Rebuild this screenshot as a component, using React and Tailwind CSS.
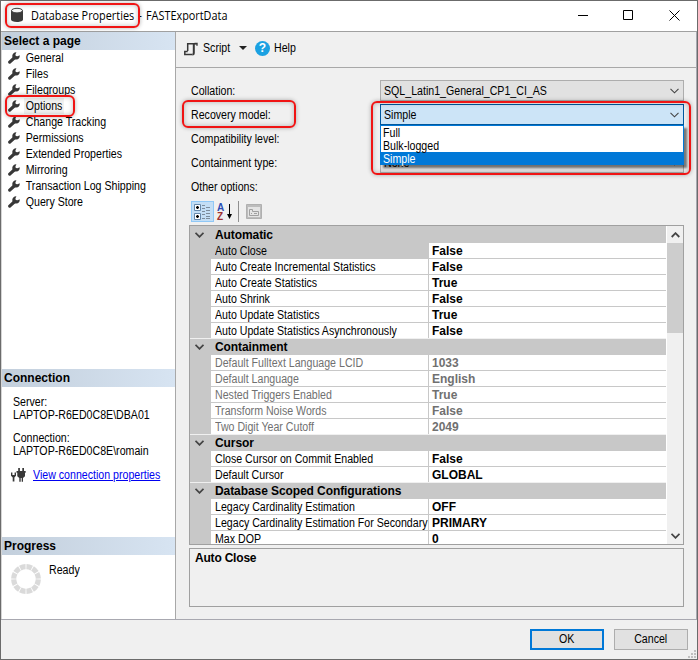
import React, { useState } from 'react';
import clsx from 'clsx';

const pages = [
    { name: 'General' },
    { name: 'Files' },
    { name: 'Filegroups' },
    { name: 'Options' },
    { name: 'Change Tracking' },
    { name: 'Permissions' },
    { name: 'Extended Properties' },
    { name: 'Mirroring' },
    { name: 'Transaction Log Shipping' },
    { name: 'Query Store' }
];

const groups = [
    {
        title: 'Automatic',
        rows: [
            ['Auto Close', 'False'],
            ['Auto Create Incremental Statistics', 'False'],
            ['Auto Create Statistics', 'True'],
            ['Auto Shrink', 'False'],
            ['Auto Update Statistics', 'True'],
            ['Auto Update Statistics Asynchronously', 'False']
        ]
    },
    {
        title: 'Containment',
        disabled: true,
        rows: [
            ['Default Fulltext Language LCID', '1033'],
            ['Default Language', 'English'],
            ['Nested Triggers Enabled', 'True'],
            ['Transform Noise Words', 'False'],
            ['Two Digit Year Cutoff', '2049']
        ]
    },
    {
        title: 'Cursor',
        rows: [
            ['Close Cursor on Commit Enabled', 'False'],
            ['Default Cursor', 'GLOBAL']
        ]
    },
    {
        title: 'Database Scoped Configurations',
        rows: [
            ['Legacy Cardinality Estimation', 'OFF'],
            ['Legacy Cardinality Estimation For Secondary', 'PRIMARY'],
            ['Max DOP', '0']
        ]
    }
];

const models = ['Full', 'Bulk-logged', 'Simple'];

// Narrow dialog lettering
function Label({ className = 'origin-left', children }) {
    return <span className={clsx('inline-block scale-x-[0.885] whitespace-nowrap', className)}>{children}</span>;
}

function DatabaseIcon() {
    return (
        <svg width="14" height="16" viewBox="0 0 14 16" className="relative -top-px">
            <path d="M1 3.500v9C1 14 3.500 15 7 15s6-1 6-2.500v-9z" fill="#3a3a3a" />
            <ellipse cx="7" cy="3.600" rx="5.500" ry="2.300" fill="#f4f4f4" stroke="#3a3a3a" />
        </svg>
    );
}

function WrenchIcon() {
    return (
        <svg width="12" height="12" viewBox="0 0 12 12" className="shrink-0">
            <path d="M1.700 10.100L6.200 6" stroke="#383838" strokeWidth="3.200" strokeLinecap="round" />
            <path d="M8.400 0.200L7.400 2.500l0.400 1.400 1.700 0.400L11.700 3.200c0.300 2.300-1 4.300-3.400 4.400-2.600 0.200-4.400-1.600-4-4C4.600 1.500 6.400 0 8.400 0.200z" fill="#383838" />
        </svg>
    );
}

function ScriptIcon() {
    return (
        <svg width="15" height="14" viewBox="0 0 15 14" fill="none" stroke="#383838" strokeWidth="1.500" className="relative top-px">
            <path d="M3.700 9V1.700H12.500" />
            <path d="M3.700 9.600H0.800V12.600H8.400" />
            <path d="M9.800 1.500V11.200Q9.800 12.600 8.400 12.600" strokeWidth="2" />
            <path d="M10.500 1.500h2.500v2.300" strokeWidth="1.400" />
        </svg>
    );
}

function PlugIcon() {
    return (
        <svg width="15" height="14" viewBox="0 0 15 14" fill="#383838" className="shrink-0">
            <path d="M0 4.500h1.400v2.500h2.200V4.500H5v3.300L3.400 9.500v4H1.700v-4L0 7.800z" />
            <path d="M7.200 0h1.700v3h2.400V0H13v3h1.700v1.800H14v3.400l-2 1.800v3.800h-1.300V10h-1v3.800H8.300V10L6.300 8.200V4.800h-0.800V3h1.700z" />
        </svg>
    );
}

function Chevron({ up, bold }) {
    return (
        <svg width="9" height="6" viewBox="0 0 9 6" fill="none" stroke="#444" strokeWidth={bold ? 1.8 : 1.1}>
            <path d={up ? 'M0.700 5L4.500 1.200 8.300 5' : 'M0.500 0.800L4.500 4.800 8.500 0.800'} />
        </svg>
    );
}

function TitleBar() {
    return (
        <div className="flex h-[31px] shrink-0 items-center border-b border-[#a0a0a0] bg-white pl-[9px] font-['Open_Sans',sans-serif] text-[12px]">
            <DatabaseIcon />
            <span className="ml-[7px] w-[107px]"><Label className="origin-left scale-x-[0.905]">Database Properties</Label></span>
            <span className="w-[8px]">-</span>
            <span className="grow"><Label className="origin-left scale-x-[0.905]">FASTExportData</Label></span>
            <svg width="110" height="12" viewBox="0 0 110 12" fill="none" stroke="#000" className="relative -top-px mr-[13px]">
                <path d="M4 6.500h10M49.500 1.500h9v9h-9zM95.500 1.500l10 10M105.500 1.500l-10 10" />
            </svg>
        </div>
    );
}

function PanelHeader({ children }) {
    return (
        <div className="h-[18px] bg-linear-to-r from-[#c3cfdc] to-[#d7e4f2] pl-[2px] text-[12px] leading-[18px] font-bold">
            {children}
        </div>
    );
}

function Spinner() {
    return (
        <svg width="30" height="30" viewBox="0 0 30 30" fill="none">
            <circle cx="15" cy="15" r="12.300" stroke="#dadada" strokeWidth="5.200" pathLength="120" strokeDasharray="8.600 1.400" strokeDashoffset="-0.700" />
        </svg>
    );
}

function Sidebar() {
    return (
        <div className="flex w-[175px] shrink-0 flex-col border-r border-l border-r-[#a8a8a8] border-l-[#d5d5d5] bg-white">
            <div className="h-[337px]">
                <PanelHeader>Select a page</PanelHeader>
                {pages.map((page) => (
                    <div key={page.name} className="flex h-4 items-center pl-[6px]">
                        <WrenchIcon />
                        <Label className={clsx('ml-[4px] origin-left px-[2px] leading-4', page.name === 'Options' && 'bg-[#f0f0f0]')}>
                            {page.name}
                        </Label>
                    </div>
                ))}
            </div>
            <div className="h-[168px]">
                <PanelHeader>Connection</PanelHeader>
                <div className="flex flex-col pt-[9px] pl-[11px] leading-[13px]">
                    <Label>Server:</Label>
                    <Label>LAPTOP-R6ED0C8E\DBA01</Label>
                    <Label className="mt-[10px] origin-left">Connection:</Label>
                    <Label>LAPTOP-R6ED0C8E\romain</Label>
                </div>
                <div className="mt-[10px] flex items-center pl-[9px]">
                    <PlugIcon />
                    <a className="ml-[7px] h-[14px] w-[128px] leading-[14px] text-[#0000f0]"><Label className="origin-left underline">View connection properties</Label></a>
                </div>
            </div>
            <div>
                <PanelHeader>Progress</PanelHeader>
                <div className="flex pt-[9px] pl-[9px]">
                    <Spinner />
                    <Label className="ml-[8px] h-[12px] origin-left leading-[12px]">Ready</Label>
                </div>
            </div>
        </div>
    );
}

function Toolbar() {
    return (
        <div className="flex h-[36px] items-center border-b border-[#a8a8a8] pb-[3px] pl-[8px]">
            <ScriptIcon />
            <span className="ml-[4px] w-[26px]"><Label>Script</Label></span>
            <svg width="8" height="4" viewBox="0 0 8 4" className="ml-[10px]">
                <path d="M0 0h8L4 4z" fill="#222" />
            </svg>
            <span className="ml-[8px] flex size-[15px] items-center justify-center rounded-full bg-[#1ba1e2] text-[12px] font-bold text-white">?</span>
            <Label className="ml-[4px] origin-left">Help</Label>
        </div>
    );
}

function FormRow({ label, value, open }) {
    return (
        <div className="flex h-[21px] items-center">
            <span className="w-[189px]"><Label>{label}</Label></span>
            <div className={clsx('flex h-[21px] w-[304px] items-center justify-between border pr-[4px] pl-[3px]', open ? 'border-[#00579c] bg-[#cce4f7]' : 'border-[#adadad] bg-[#e1e1e1]')}>
                <Label>{value}</Label>
                <Chevron />
            </div>
        </div>
    );
}

function GridTools() {
    return (
        <div className="flex h-[23px] items-center">
            <div className="flex h-[21px] w-[23px] items-center justify-center border border-[#90c8f6] bg-[#c3def5]">
                <svg width="17" height="17" viewBox="0 0 17 17" fill="none">
                    <path d="M0.500 1.500h6v6h-6zM0.500 10.500h6v6h-6z" fill="#fff" stroke="#6688aa" />
                    <path d="M2 4.500h3M3.500 3v3M2 13.500h3M3.500 12v3" stroke="#000" strokeWidth="1.400" />
                    <path d="M8 2.500h3M8 5.500h3M8 8.500h3M8 11.500h3M8 15.500h3M12 4.500h4M12 7.500h4M12 10.500h4M12 13.500h4M12 15.500h4" stroke="#7c8c9c" />
                </svg>
            </div>
            <div className="ml-[3px] w-[8px] text-[10px] leading-[9px] font-bold">
                <div className="text-[#2b4db5]">A</div>
                <div className="text-[#a03030]">Z</div>
            </div>
            <svg width="5" height="15" viewBox="0 0 5 15" className="ml-[2px]">
                <path d="M2 0h1v10H5L2.500 15 0 10h2z" fill="#000" />
            </svg>
            <div className="ml-[6px] h-[21px] w-px bg-[#8f8f8f]" />
            <svg width="16" height="15" viewBox="0 0 16 15" fill="none" className="ml-[7px]">
                <path d="M0.500 0.500h15v14h-15z" fill="#bcbcbc" stroke="#b0b0b0" />
                <path d="M2 3h12v10H2z" fill="#e4e4e4" />
                <path d="M3.500 11.500v-6h3v2h6v4zM5 9.500h1M8 9.500h3" stroke="#a0a0a0" />
            </svg>
        </div>
    );
}

function PropertyRow({ row, disabled, selected, last, onSelect }) {
    return (
        <div className={clsx('flex h-4 shrink-0 border-b', last ? 'border-[#f0f0f0]' : 'border-[#c8c8c8]')} onClick={onSelect}>
            <div className="-mb-px w-[21px] border-b border-inherit bg-[#c8c8c8]" />
            <div className={clsx('w-[218px] border-r border-[#c8c8c8] pl-[4px] leading-[16px] whitespace-nowrap', selected ? 'bg-[#c8c8c8]' : 'bg-white', disabled && 'text-[#707070]')}>
                <Label>{row[0]}</Label>
            </div>
            <div className={clsx('grow bg-white pl-[3px] text-[12px] leading-[16px] font-bold', disabled && 'text-[#707070]')}>
                {row[1]}
            </div>
        </div>
    );
}

function PropertyGrid() {
    const [selected, setSelected] = useState('Auto Close');

    return (
        <div>
            <div className="flex h-[320px] w-[495px] border border-[#a0a0a0] bg-[#c8c8c8]">
                <div className="flex w-[476px] flex-col overflow-hidden pt-px">
                    {groups.map((group) => (
                        <React.Fragment key={group.title}>
                            <div className="flex h-4 shrink-0 items-center bg-[#c8c8c8] pl-[5px]">
                                <Chevron bold />
                                <span className="ml-[11px] text-[12px] leading-4 font-bold tracking-[-0.080px]">{group.title}</span>
                            </div>
                            {group.rows.map((row, i) => (
                                <PropertyRow
                                    key={row[0]}
                                    row={row}
                                    disabled={group.disabled}
                                    selected={row[0] === selected}
                                    last={i === group.rows.length - 1}
                                    onSelect={() => setSelected(row[0])}
                                />
                            ))}
                        </React.Fragment>
                    ))}
                </div>
                <div className="flex w-[17px] flex-col items-center border-l border-white bg-[#f0f0f0]">
                    <div className="flex h-[17px] items-center"><Chevron up bold /></div>
                    <div className="h-[90px] w-full bg-[#cdcdcd]" />
                    <div className="mt-auto flex h-[17px] items-center"><Chevron bold /></div>
                </div>
            </div>
            <div className="mt-[3px] h-[59px] w-[495px] border border-[#a0a0a0] pt-px pl-[5px] text-[12px] leading-4 font-bold tracking-[-0.200px]">
                {selected}
            </div>
        </div>
    );
}

function Dropdown() {
    return (
        <div className="absolute top-[124px] left-[379px] w-[304px] border border-b-0 border-[#0078d7] bg-white shadow-[3px_3px_2px_rgba(0,0,0,0.5)]">
            {models.map((model) => (
                <div key={model} className={clsx('h-[13px] pl-[2px] leading-[14px]', model === 'Simple' && 'bg-[#0078d7] text-white')}>
                    <Label>{model}</Label>
                </div>
            ))}
        </div>
    );
}

function Highlight({ className }) {
    return <div className={clsx('pointer-events-none absolute rounded-[6px] border-2 border-[#f01414] shadow-[0_0_4px_rgba(0,0,0,0.3),inset_0_0_5px_rgba(0,0,0,0.25)]', className)} />;
}

function App() {
    return (
        <div className="relative flex h-[660px] w-[698px] flex-col border border-[#6b6b6b] bg-[#f0f0f0] font-['Liberation_Sans',Arial,sans-serif] text-[12px] text-black">
            <TitleBar />
            <div className="flex h-[588px] shrink-0 border-r border-b border-[#a8a8b0]">
                <Sidebar />
                <div className="grow">
                    <Toolbar />
                    <div className="pt-[12px] pl-[15px]">
                        <div className="flex flex-col gap-[3px]">
                            <FormRow label="Collation:" value="SQL_Latin1_General_CP1_CI_AS" />
                            <FormRow label="Recovery model:" value="Simple" open />
                            <FormRow label="Compatibility level:" value="" />
                            <FormRow label="Containment type:" value="None" />
                        </div>
                        <div className="mt-[5px] mb-[4px] h-[18px] leading-[18px]"><Label>Other options:</Label></div>
                        <GridTools />
                        <div className="mt-[2px] -ml-[2px]">
                            <PropertyGrid />
                        </div>
                    </div>
                </div>
            </div>
            <div className="flex grow items-start justify-end gap-[10px] pt-[9px] pr-[9px]">
                <button className="h-[21px] w-[74px] border-2 border-[#0078d7] bg-[#e1e1e1] leading-[17px]"><Label className="origin-center">OK</Label></button>
                <button className="h-[21px] w-[74px] border border-[#adadad] bg-[#e1e1e1] leading-[19px]"><Label className="origin-center">Cancel</Label></button>
            </div>
            <svg width="8" height="8" viewBox="0 0 8 8" fill="#bfbfbf" className="absolute right-[1px] bottom-[1px]">
                <path d="M6 0h2v2H6zM3 3h2v2H3zM6 3h2v2H6zM0 6h2v2H0zM3 6h2v2H3zM6 6h2v2H6z" />
            </svg>
            <Dropdown />
            <Highlight className="top-[2px] left-[4px] h-[25px] w-[135px]" />
            <Highlight className="top-[94px] left-[4px] h-[22px] w-[70px]" />
            <Highlight className="top-[99px] left-[181px] h-[28px] w-[114px]" />
            <Highlight className="top-[100px] left-[370px] h-[74px] w-[320px]" />
        </div>
    );
}

export default App;
